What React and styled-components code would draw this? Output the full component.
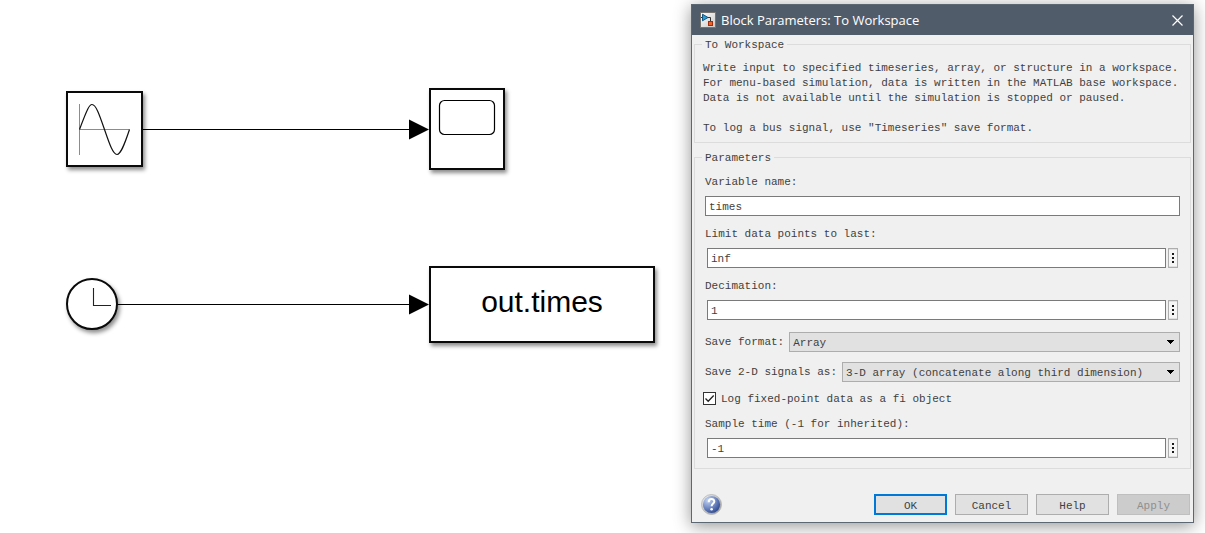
import React from "react";
import styled, { createGlobalStyle, css } from "styled-components";

const GlobalStyle = createGlobalStyle`
  *, *::before, *::after { box-sizing: border-box; }
  body { margin: 0; background: #ffffff; }
`;

const mono = css`
  font-family: "Liberation Mono", monospace;
  font-size: 11px;
  line-height: 15px;
  color: #3f3f3f;
`;

const Page = styled.main`
  display: flex;
  align-items: flex-start;
  min-height: 100vh;
  padding: 4px 11px 10px 0;
  overflow: hidden;
`;

/* ---------- Model canvas ---------- */

const Canvas = styled.section`
  position: relative;
  flex: 1 0 660px;
  align-self: stretch;
`;

const Wires = styled.svg`
  position: absolute;
  left: 0;
  top: 0;
  width: 100%;
  height: 100%;
`;

const Block = styled.div`
  position: absolute;
  left: ${(p) => p.$x}px;
  top: ${(p) => p.$y}px;
  width: ${(p) => p.$w}px;
  height: ${(p) => p.$h}px;
  display: flex;
  align-items: center;
  justify-content: center;
  border: 2px solid #0a0a0a;
  border-radius: ${(p) => (p.$round ? "50%" : "0")};
  background: #fff;
  box-shadow: 2px 3px 4px rgba(0, 0, 0, 0.45);
  font: 30px/34px "Liberation Sans", sans-serif;
  color: #000;

  svg { display: block; width: 100%; height: 100%; }
`;

const BlockText = styled.span`
  padding-bottom: 6px;
`;

/* ---------- Dialog ---------- */

const Dialog = styled.form`
  flex: 0 1 503px;
  min-width: 0;
  border: 1px solid #5b6874;
  background: #f0f0f0;
  box-shadow: 0 3px 16px rgba(0, 0, 0, 0.42);
  ${mono}
`;

const TitleBar = styled.header`
  display: flex;
  align-items: center;
  gap: 5px;
  height: 30px;
  padding: 0 10px 0 8px;
  background: #515c6a;
  svg { display: block; }
`;

const Title = styled.h1`
  flex: 1;
  margin: 0;
  font: 400 13px/18px "Open Sans", "Noto Sans", sans-serif;
  color: #fff;
`;

const CloseButton = styled.button`
  padding: 0;
  border: 0;
  background: none;
`;

const Body = styled.div`
  display: flex;
  flex-direction: column;
  gap: 7px;
  padding: 2px 2px 0;
`;

const Group = styled.fieldset`
  min-width: 0;
  margin: 0;
  padding: 0;
  border: 1px solid #dcdcdc;
`;

const Legend = styled.legend`
  height: 15px;
  margin-left: 7px;
  padding: 1px 3px 0;
`;

const Description = styled.p`
  margin: 0;
  padding: 9px 8px 6px;
  white-space: pre-line;
`;

const Params = styled.div`
  display: flex;
  flex-direction: column;
  gap: 12px;
  padding: 10px;
`;

const Stack = styled.div`
  display: flex;
  flex-direction: column;
  gap: ${(p) => p.$gap}px;
`;

const Field = styled.div`
  display: flex;
  flex-direction: column;
  gap: 6px;
`;

const EntryRow = styled.div`
  display: flex;
  gap: 2px;
  padding: ${(p) => (p.$inset ? "0 2px" : "0")};
`;

const TextInput = styled.input`
  ${mono}
  flex: 1;
  min-width: 0;
  height: 20px;
  margin: 0;
  padding: 1px 3px 0;
  border: 1px solid #7a7a7a;
  border-radius: 0;
  background: #fff;
`;

const MoreButton = styled.button`
  display: flex;
  align-items: center;
  justify-content: center;
  width: 10px;
  height: 20px;
  padding: 0;
  border: 1px solid #adadad;
  background: #f6f6f6;
  box-shadow: inset 0 1px #e1e1e1, inset 0 -1px #e1e1e1;
`;

const SelectRow = styled.div`
  display: flex;
  align-items: center;
  gap: 5px;
`;

const SelectBox = styled.div`
  position: relative;
  flex: 1;
  min-width: 0;

  svg {
    position: absolute;
    right: 6px;
    top: 8px;
    pointer-events: none;
  }
`;

const Select = styled.select`
  ${mono}
  appearance: none;
  display: block;
  width: 100%;
  height: 20px;
  margin: 0;
  padding: 2px 20px 0 3px;
  border: 1px solid #adadad;
  border-radius: 0;
  background: #e1e1e1;
`;

const CheckLabel = styled.label`
  display: flex;
  gap: 5px;
  margin-left: -2px;
`;

const CheckBox = styled.span`
  position: relative;
  width: 13px;
  height: 13px;

  svg {
    position: absolute;
    left: 0;
    top: 0;
    pointer-events: none;
  }
`;

const CheckInput = styled.input`
  appearance: none;
  display: block;
  width: 13px;
  height: 13px;
  margin: 0;
  border: 1px solid #333;
  background: #fff;

  &:not(:checked) + svg { display: none; }
`;

const Footer = styled.footer`
  display: flex;
  align-items: center;
  gap: 8px;
  padding: 25px 3px 7px 9px;
`;

const HelpIconButton = styled.button`
  height: 21px;
  margin-right: auto;
  padding: 0;
  border: 0;
  background: none;
  svg { display: block; }
`;

const Button = styled.button`
  ${mono}
  width: 73px;
  height: 21px;
  padding: 3px 0 0;
  border: 1px solid #adadad;
  border-radius: 0;
  background: #e1e1e1;

  ${(p) => p.$primary && css`
    border: 2px solid #0078d7;
  `}

  &:disabled {
    border-color: #bfbfbf;
    background: #cccccc;
    color: #8f8f8f;
  }
`;

function Wire({ from, to, y }) {
  return (
    <g>
      <path d={`M${from} ${y + 0.5}H${to - 15}`} stroke="#000" strokeWidth="1" />
      <path d={`M${to - 20} ${y - 9.5}L${to} ${y + 0.5}L${to - 20} ${y + 10.5}Z`} fill="#000" />
    </g>
  );
}

function Model() {
  return (
    <Canvas aria-label="Model">
      <Wires>
        <Wire from={140} to={429} y={125} />
        <Wire from={116} to={429} y={300} />
      </Wires>
      <Block $x={66} $y={87} $w={77} $h={76}>
        <svg viewBox="0 0 73 72" fill="none">
          <path d="M11.5 11v51M11.5 36.5h50" stroke="#8c8c8c" />
          <path d="M11.500 36.500C19.500 15 21.500 11.500 24 11.500C28 11.500 31.500 22 36.500 36.500C41.500 51 45 61.500 49 61.500C52.500 61.500 56 53 61.500 36.500" stroke="#111" strokeWidth="1.200" />
        </svg>
      </Block>
      <Block $x={429} $y={84} $w={76} $h={82}>
        <svg viewBox="0 0 72 78" fill="none">
          <rect x="8.500" y="10.500" width="55" height="34" rx="5" stroke="#000" strokeWidth="1.200" />
        </svg>
      </Block>
      <Block $x={66} $y={274} $w={52} $h={52} $round>
        <svg viewBox="0 0 48 48" fill="none">
          <path d="M25.500 8v17.500H43" stroke="#222" strokeWidth="1.100" />
        </svg>
      </Block>
      <Block $x={429} $y={262} $w={226} $h={77}>
        <BlockText>out.times</BlockText>
      </Block>
    </Canvas>
  );
}

function TextField({ id, label, value, more }) {
  return (
    <Field>
      <label htmlFor={id}>{label}</label>
      <EntryRow $inset={more}>
        <TextInput id={id} type="text" defaultValue={value} />
        {more && (
          <MoreButton type="button" aria-label={`${label} options`}>
            <svg width="2" height="10" viewBox="0 0 2 10">
              <path d="M0 0h2v2H0zM0 4h2v2H0zM0 8h2v2H0z" fill="#1a1a1a" />
            </svg>
          </MoreButton>
        )}
      </EntryRow>
    </Field>
  );
}

function SelectField({ id, label, value }) {
  return (
    <SelectRow>
      <label htmlFor={id}>{label}</label>
      <SelectBox>
        <Select id={id} defaultValue={value}>
          <option>{value}</option>
        </Select>
        <svg width="7" height="4" viewBox="0 0 7 4" shapeRendering="crispEdges">
          <path d="M0 0h7v1H0zM1 1h5v1H1zM2 2h3v1H2zM3 3h1v1H3z" fill="#000" />
        </svg>
      </SelectBox>
    </SelectRow>
  );
}

function BlockIcon() {
  return (
    <svg width="16" height="16" viewBox="0 0 16 16">
      <defs>
        <linearGradient id="tile" x1="0" y1="0" x2="1" y2="1">
          <stop offset="0" stopColor="#ffffff" />
          <stop offset="1" stopColor="#c8c8c8" />
        </linearGradient>
      </defs>
      <rect x="0.500" y="0.500" width="15" height="15" fill="url(#tile)" stroke="#77736f" />
      <path d="M1 5.500h2M7 5.500h3.500v4" fill="none" stroke="#333" />
      <path d="M2.500 2.200l5.500 3.300L2.500 8.800z" fill="#2b9bd0" stroke="#14557f" />
      <rect x="8.500" y="9.500" width="4" height="4" fill="#e8622c" stroke="#a32c0c" />
    </svg>
  );
}

function HelpIcon() {
  return (
    <svg width="21" height="21" viewBox="0 0 21 21">
      <defs>
        <radialGradient id="ball" cx="0.300" cy="0.250" r="0.850">
          <stop offset="0" stopColor="#c3d3f0" />
          <stop offset="0.450" stopColor="#7f96cc" />
          <stop offset="1" stopColor="#26418c" />
        </radialGradient>
        <linearGradient id="rim" x1="0" y1="0" x2="1" y2="1">
          <stop offset="0" stopColor="#f4f4f4" />
          <stop offset="1" stopColor="#8f8f8f" />
        </linearGradient>
      </defs>
      <circle cx="10.500" cy="10.500" r="10" fill="url(#rim)" stroke="#b4b4b4" strokeWidth="0.800" />
      <circle cx="10.500" cy="10.500" r="8.600" fill="url(#ball)" />
      <path d="M7.700 8.200C7.700 3.900 13.300 4.200 13.300 7.500C13.300 9.600 10.600 9.700 10.600 12.300" fill="none" stroke="#fff" strokeWidth="2" />
      <circle cx="10.600" cy="15.200" r="1.300" fill="#fff" />
    </svg>
  );
}

const description = `Write input to specified timeseries, array, or structure in a workspace.
For menu-based simulation, data is written in the MATLAB base workspace.
Data is not available until the simulation is stopped or paused.

To log a bus signal, use "Timeseries" save format.`;

export default function App() {
  return (
    <>
      <GlobalStyle />
      <Page>
        <Model />
        <Dialog onSubmit={(e) => e.preventDefault()}>
          <TitleBar>
            <BlockIcon />
            <Title>Block Parameters: To Workspace</Title>
            <CloseButton type="button" aria-label="Close">
              <svg width="11" height="11" viewBox="0 0 11 11">
                <path d="M0.500 0.500l10 10M10.500 0.500l-10 10" stroke="#fff" strokeWidth="1.200" />
              </svg>
            </CloseButton>
          </TitleBar>
          <Body>
            <Group>
              <Legend>To Workspace</Legend>
              <Description>{description}</Description>
            </Group>
            <Group>
              <Legend>Parameters</Legend>
              <Params>
                <Stack $gap={11}>
                  <TextField id="variable" label="Variable name:" value="times" />
                  <TextField id="limit" label="Limit data points to last:" value="inf" more />
                  <TextField id="decimation" label="Decimation:" value="1" more />
                </Stack>
                <Stack $gap={10}>
                  <SelectField id="format" label="Save format:" value="Array" />
                  <SelectField
                    id="signals"
                    label="Save 2-D signals as:"
                    value="3-D array (concatenate along third dimension)"
                  />
                  <CheckLabel>
                    <CheckBox>
                      <CheckInput type="checkbox" defaultChecked />
                      <svg width="13" height="13" viewBox="0 0 13 13" fill="none">
                        <path d="M2.500 6.500l2.700 2.800L10.700 3.500" stroke="#222" strokeWidth="1.300" />
                      </svg>
                    </CheckBox>
                    Log fixed-point data as a fi object
                  </CheckLabel>
                  <TextField id="sample" label="Sample time (-1 for inherited):" value="-1" more />
                </Stack>
              </Params>
            </Group>
          </Body>
          <Footer>
            <HelpIconButton type="button" aria-label="About this dialog">
              <HelpIcon />
            </HelpIconButton>
            <Button type="submit" $primary>OK</Button>
            <Button type="button">Cancel</Button>
            <Button type="button">Help</Button>
            <Button type="button" disabled>Apply</Button>
          </Footer>
        </Dialog>
      </Page>
    </>
  );
}
